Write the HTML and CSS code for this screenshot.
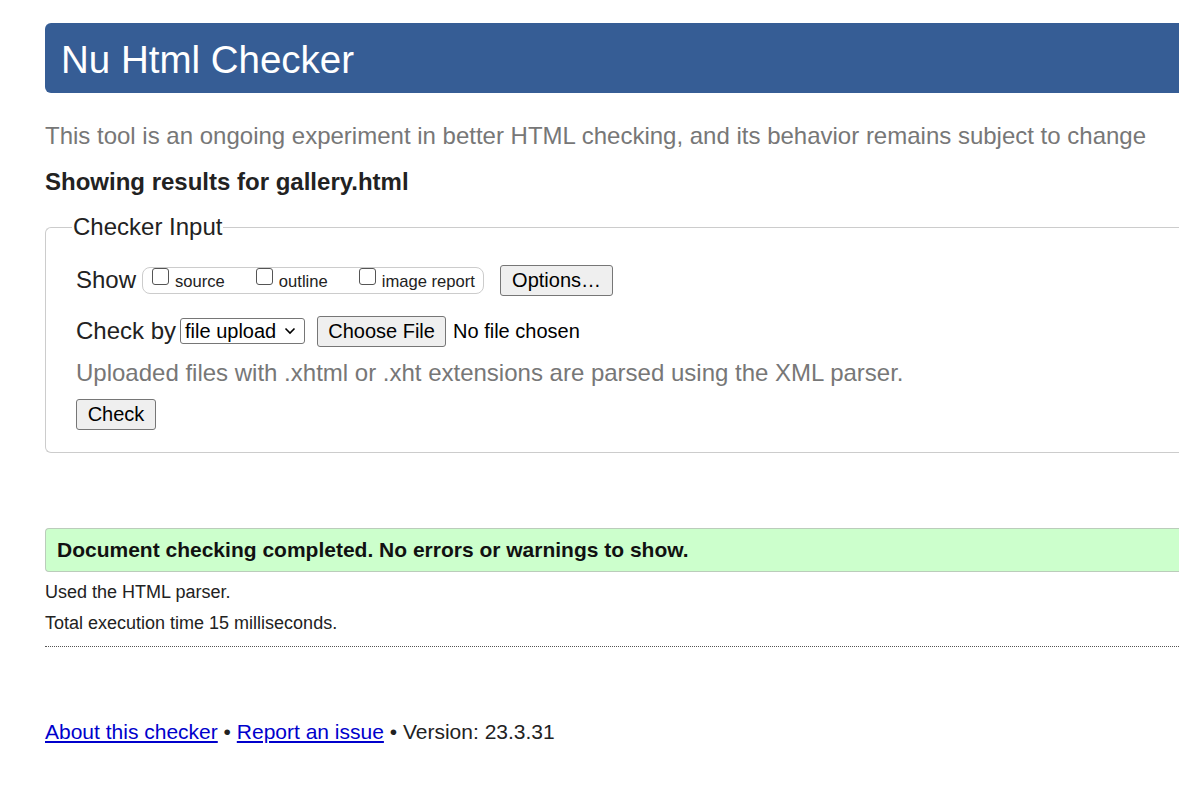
FILE: index.html
```html
<!DOCTYPE html>
<html lang="en">
<head>
<meta charset="utf-8">
<title>Showing results for gallery.html - Nu Html Checker</title>
<link rel="stylesheet" href="styles.css">
</head>
<body>
<div class="page">
  <h1 class="banner">Nu Html Checker</h1>
  <p class="intro">This tool is an ongoing experiment in better HTML checking, and its behavior remains subject to change</p>
  <p class="showing">Showing results for gallery.html</p>
  <fieldset class="input">
    <legend class="legend">Checker Input</legend>
    <div class="row">
      <span class="label">Show</span>
      <span class="group">
        <label class="opt"><span class="box"></span>source</label>
        <label class="opt"><span class="box"></span>outline</label>
        <label class="opt"><span class="box"></span>image report</label>
      </span>
      <span class="btn btn-options">Options…</span>
    </div>
    <div class="row row-check">
      <span class="label">Check by</span>
      <span class="select">file upload <svg class="chev" width="12" height="8" viewBox="0 0 12 8"><path d="M1.5 1.5 L6 6 L10.5 1.5" fill="none" stroke="#000" stroke-width="1.6"/></svg></span>
      <span class="btn btn-file">Choose File</span>
      <span class="nofile">No file chosen</span>
    </div>
    <p class="note">Uploaded files with .xhtml or .xht extensions are parsed using the XML parser.</p>
    <span class="btn btn-check">Check</span>
  </fieldset>
  <div class="success">Document checking completed. No errors or warnings to show.</div>
  <p class="small">Used the HTML parser.</p>
  <p class="small">Total execution time 15 milliseconds.</p>
  <hr class="rule">
  <p class="footer"><a href="#">About this checker</a> • <a href="#">Report an issue</a> • Version: 23.3.31</p>
</div>
</body>
</html>
```
FILE: styles.css
```css
html, body {
  margin: 0;
  padding: 0;
  overflow: hidden;
  background: #fff;
}
body {
  font-family: "Liberation Sans", Arial, sans-serif;
  color: #222;
}
.page {
  width: 1300px;
  padding: 23px 0 0 45px;
}
.banner {
  margin: 0;
  height: 67px;
  padding-top: 3px;
  line-height: 67px;
  background: #365d95;
  color: #fff;
  font-size: 38.5px;
  font-weight: normal;
  padding-left: 16px;
  border-radius: 6px 0 0 6px;
}
.intro {
  margin: 28px 0 0;
  font-size: 24px;
  line-height: 30px;
  color: #777;
}
.showing {
  margin: 16px 0 0;
  font-size: 24px;
  line-height: 30px;
  font-weight: bold;
  color: #222;
}
.input {
  margin: 17px 0 0;
  border: 1px solid #ccc;
  border-radius: 6px 0 0 6px;
  border-right: none;
  padding: 24px 30px 22px 30px;
}
.legend {
  font-size: 24px;
  line-height: 26px;
  padding: 0 1px;
  margin-left: -4px;
  color: #222;
}
.row {
  display: flex;
  align-items: center;
  height: 32px;
  font-size: 24px;
}
.row-check {
  margin-top: 19px;
}
.label {
  margin-right: 6px;
}
.row-check .label {
  margin-right: 4px;
}
.group {
  display: inline-flex;
  align-items: center;
  box-sizing: border-box;
  height: 27px;
  width: 342px;
  border: 1px solid #ccc;
  border-radius: 8px;
  padding: 0 0 0 9px;
  font-size: 16.6px;
  margin-right: 16px;
}
.opt {
  display: inline-flex;
  align-items: center;
  margin-right: 31px;
  padding-top: 4px;
}
.opt:last-child {
  margin-right: 0;
}
.box {
  display: inline-block;
  width: 17px;
  height: 17px;
  border: 1px solid #555;
  border-radius: 3px;
  box-sizing: border-box;
  margin-right: 6px;
  position: relative;
  top: -6px;
}
.btn {
  display: inline-flex;
  align-items: center;
  justify-content: center;
  box-sizing: border-box;
  border: 1px solid #767676;
  border-radius: 3px;
  background: #efefef;
  color: #000;
  font-size: 20px;
}
.btn-options {
  width: 113px;
  height: 31px;
}
.select {
  display: inline-flex;
  align-items: center;
  box-sizing: border-box;
  height: 26px;
  width: 125px;
  border: 1px solid #767676;
  border-radius: 3px;
  font-size: 20px;
  padding-left: 4px;
  color: #000;
}
.chev {
  margin-left: 8px;
}
.btn-file {
  width: 129px;
  height: 31px;
  margin-left: 12px;
}
.nofile {
  font-size: 20px;
  margin-left: 7px;
  color: #000;
}
.note {
  margin: 11px 0 0;
  font-size: 24px;
  line-height: 30px;
  color: #777;
}
.btn-check {
  margin-top: 11px;
  width: 80px;
  height: 31px;
}
.success {
  margin-top: 75px;
  height: 44px;
  box-sizing: border-box;
  background: #ccffcc;
  border: 1px solid #bbccbb;
  border-right: none;
  border-radius: 4px 0 0 4px;
  padding-left: 11px;
  display: flex;
  align-items: center;
  font-size: 21px;
  font-weight: bold;
  color: #111;
}
.small {
  margin: 10px 0 0;
  font-size: 18px;
  line-height: 21px;
  color: #222;
}
.small + .small {
  margin-top: 10px;
}
.rule {
  margin: 12px 0 0;
  border: none;
  border-top: 1px dotted #555;
  height: 0;
}
.footer {
  margin: 72px 0 0;
  font-size: 21px;
  line-height: 26px;
  color: #222;
}
.footer a {
  color: #00c;
}
```
